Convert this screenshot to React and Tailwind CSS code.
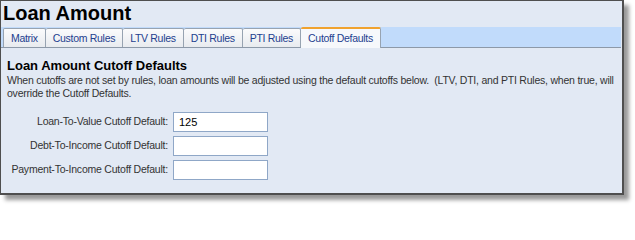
import React from "react";

const tabs = ["Matrix", "Custom Rules", "LTV Rules", "DTI Rules", "PTI Rules"];

const fields = [
  { label: "Loan-To-Value Cutoff Default:", value: "125" },
  { label: "Debt-To-Income Cutoff Default:", value: "" },
  { label: "Payment-To-Income Cutoff Default:", value: "" },
];

const App = () => {
  return (
    <div className="w-[635px] h-[206px] bg-white font-['Liberation_Sans',Arial,sans-serif]">
      <div className="w-[624px] h-[195px] border border-[#4f4f4f] border-r-2 border-b-2 bg-[#e2e9f4] shadow-[5px_5px_4px_rgba(0,0,0,0.4)] flex flex-col">
        {/* Title */}
        <h1 className="h-[26px] pl-[2px] text-[20px] leading-[24px] font-bold text-black">
          Loan Amount
        </h1>

        {/* Tab strip */}
        <div className="h-[21px] bg-[#c1dbfb] border-b border-[#8d99a8] flex items-end pl-[2px] mr-[1px]">
          {tabs.map((t) => (
            <div
              key={t}
              className="h-[19px] px-[7px] border border-b-0 border-l-0 first:border-l border-[#97a3b1] bg-gradient-to-b from-[#fbfbfc] to-[#e8ebef] text-[#23408f] text-[10.5px] leading-[18px] tracking-[-0.3px] rounded-t-[2px]"
            >
              {t}
            </div>
          ))}
          <div className="h-[21px] px-[7px] -mb-px border border-b-0 border-l-0 border-[#97a3b1] border-t-2 border-t-[#f0a22e] bg-[#f6f8fb] text-[#23408f] text-[10.5px] leading-[18px] tracking-[-0.3px] rounded-t-[2px]">
            Cutoff Defaults
          </div>
        </div>

        {/* Content */}
        <div className="px-[6px] pt-[10px]">
          <h2 className="text-[13px] leading-[16px] font-bold text-black">
            Loan Amount Cutoff Defaults
          </h2>
          <p className="text-[10.5px] leading-[13px] text-[#333] tracking-[-0.22px]">
            When cutoffs are not set by rules, loan amounts will be adjusted using the default cutoffs below.&nbsp; (LTV, DTI, and PTI Rules, when true, will override the Cutoff Defaults.
          </p>

          <div className="mt-[12px] flex flex-col gap-[4px]">
            {fields.map((f) => (
              <div key={f.label} className="flex items-center">
                <label className="w-[161px] text-right text-[10.5px] text-[#333] tracking-[-0.22px]">
                  {f.label}
                </label>
                <input
                  readOnly
                  value={f.value}
                  className="ml-[5px] w-[95px] h-[20px] border border-[#8fa7c7] bg-white px-[5px] text-[11px] text-black outline-none"
                />
              </div>
            ))}
          </div>
        </div>
      </div>
    </div>
  );
};

export default App;
